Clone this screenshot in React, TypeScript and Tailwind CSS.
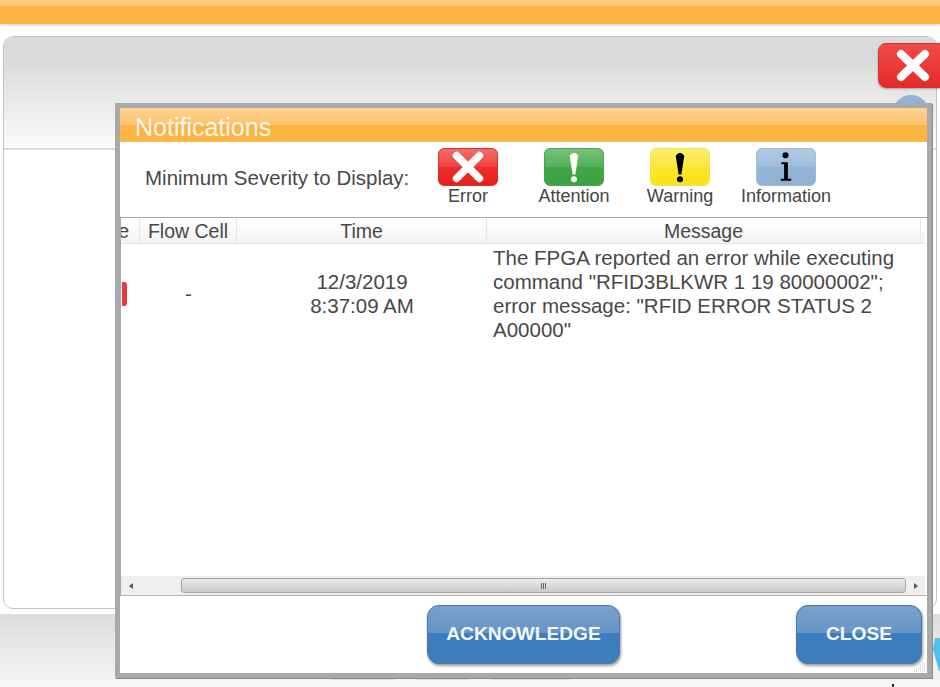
import type { ReactNode } from 'react';

const severities = [
  {
    label: 'Error',
    box: 'border-[#d8322f] bg-gradient-to-b from-[#f03a38] to-[#e81f1c]',
    mark: (
      <svg viewBox="0 0 60 38" className="relative h-full w-full">
        <path d="M18 7 L42 31 M42 7 L18 31" stroke="#fff" strokeWidth="8" strokeLinecap="round" />
      </svg>
    ),
  },
  {
    label: 'Attention',
    box: 'border-[#4d9f53] bg-gradient-to-b from-[#4aab4e] to-[#39a241]',
    mark: (
      <svg viewBox="0 0 60 38" className="relative h-full w-full">
        <path d="M25.5 7 Q30 1 34.5 7 L31.5 27 L28.5 27 Z" fill="#fff" />
        <circle cx="30" cy="32" r="3.2" fill="#fff" />
      </svg>
    ),
  },
  {
    label: 'Warning',
    box: 'border-[#f3e04f] bg-gradient-to-b from-[#fae83a] to-[#fbe316]',
    mark: (
      <svg viewBox="0 0 60 38" className="relative h-full w-full">
        <path d="M25.5 7 Q30 1 34.5 7 L31.5 27 L28.5 27 Z" fill="#000" />
        <circle cx="30" cy="32" r="3.2" fill="#000" />
      </svg>
    ),
  },
  {
    label: 'Information',
    box: 'border-[#9dbbd9] bg-gradient-to-b from-[#98b9da] to-[#8fb1d4]',
    mark: (
      <svg viewBox="0 0 60 38" className="relative h-full w-full">
        <circle cx="29.5" cy="6.5" r="3.2" fill="#000" />
        <path d="M25 14 H32 V31.5 H35.5 V33.5 H24.5 V31.5 H28 V16 H25 Z" fill="#000" />
      </svg>
    ),
  },
];

function HeaderCell({ className, children }: { className: string; children: ReactNode }) {
  return (
    <div className={`flex items-center justify-center overflow-hidden border-r border-[#e6e6e6] ${className}`}>
      {children}
    </div>
  );
}

function BlueButton({ className, children }: { className: string; children: ReactNode }) {
  return (
    <button className={`relative h-[59px] overflow-hidden rounded-[12px] border border-[#4478ad] bg-[#3e7dbd] text-[19.2px] font-bold text-[#f4f7fb] shadow-[1px_2px_3px_rgba(0,0,0,0.4)] ${className}`}>
      <span className="absolute inset-x-0 top-0 h-[27px] bg-gradient-to-b from-[#78a1cb] to-[#6695c6]" />
      <span className="relative">{children}</span>
    </button>
  );
}

export default function App() {
  return (
    <div className="relative h-[687px] w-[940px] overflow-hidden bg-white font-['Liberation_Sans',Arial,sans-serif] text-[#444]">
      <div className="h-[24px] bg-[#feb343] shadow-[0_1px_3px_rgba(0,0,0,0.2)]">
        <div className="h-[6px] bg-[#fdcb7b]" />
      </div>

      <div className="mx-[3px] mt-[12px] h-[573px] overflow-hidden rounded-[10px] border border-[#c4c4c4] bg-white">
        <div className="h-[113px] border-b-2 border-[#dcdcdc] bg-gradient-to-b from-[#dadada] from-20% to-[#fbfbfb]" />
      </div>

      <div className="mt-[5px] h-[73px] bg-gradient-to-b from-[#dcdcdc] to-[#f7f7f7]" />

      {/* things peeking out from behind the dialog */}
      <div className="absolute left-[878px] top-[43px] flex h-[45px] w-[70px] items-center overflow-hidden rounded-[8px] border border-[#d8322f] bg-gradient-to-b from-[#f04a48] to-[#e62a28] shadow-[0_1px_2px_rgba(0,0,0,0.3)]">
        <svg viewBox="0 0 66 45" className="h-[45px] w-[66px]">
          <path d="M22 11 L46 34 M46 11 L22 34" stroke="#fff" strokeWidth="8" strokeLinecap="round" />
        </svg>
      </div>
      <div className="absolute left-[893px] top-[95px] size-[36px] rounded-full bg-[#8fb4d8]" />
      <svg viewBox="0 0 8 36" className="absolute left-[932px] top-[637px] h-[36px] w-[8px]">
        <path d="M8 1 L3 1 L1 12 L7 34 L8 34 Z" fill="#4cc4ea" />
      </svg>
      <div className="absolute left-[330px] top-[679px] h-[1px] w-[65px] bg-[#dcdfe3]" />
      <div className="absolute left-[415px] top-[679px] h-[1px] w-[55px] bg-[#dcdfe3]" />
      <div className="absolute left-[490px] top-[679px] h-[1px] w-[80px] bg-[#dcdfe3]" />
      <div className="absolute left-[892px] top-[684px] h-[3px] w-[2px] bg-[#222]" />

      <div className="absolute left-[115px] top-[103px] flex h-[575px] w-[817px] flex-col border-[5px] border-[#a9a9a9] bg-white shadow-[1px_1px_0_#8a8a8a]">
        <div className="h-[34px] shrink-0 bg-[#feb343]">
          <div className="absolute inset-x-0 top-0 h-[17px] bg-gradient-to-b from-[#fdd394] to-[#fdc26a]" />
          <div className="relative pl-[15px] text-[25px] leading-[39px] text-[#fff8ec]">Notifications</div>
        </div>

        <div className="flex h-[75px] shrink-0 items-start">
          <div className="w-[295px] pl-[25px] pt-[24px] text-[20.5px] leading-[24px] text-[#484848]">
            Minimum Severity to Display:
          </div>
          <div className="flex pt-[6px]">
            {severities.map((s) => (
              <div key={s.label} className="flex w-[106px] flex-col items-center">
                <div className={`relative h-[38px] w-[60px] overflow-hidden rounded-[6px] border ${s.box}`}>
                  <div className="absolute inset-x-0 top-0 h-[18px] bg-gradient-to-b from-white/25 to-white/10" />
                  {s.mark}
                </div>
                <div className="text-[18px] leading-[20px] text-[#444]">{s.label}</div>
              </div>
            ))}
          </div>
        </div>

        <div className="flex min-h-0 flex-1 flex-col border-l border-t border-[#a8a8a8] pr-[2px]">
          <div className="flex h-[26px] shrink-0 border-b border-[#e4e4e4] bg-gradient-to-b from-white to-[#f3f3f3] text-[19.5px] leading-[26px] text-[#484848]">
            <HeaderCell className="w-[19px] !justify-start">
              <span className="ml-[-5px] w-[13px] shrink-0 text-right">e</span>
            </HeaderCell>
            <HeaderCell className="w-[97px]">Flow Cell</HeaderCell>
            <HeaderCell className="w-[250px]">Time</HeaderCell>
            <HeaderCell className="w-[434px]">Message</HeaderCell>
          </div>

          <div className="flex min-h-0 flex-1 pt-[2px] text-[20.5px] leading-[24px] text-[#484848]">
            <div className="w-[19px] pt-[36px]">
              <div className="ml-[1px] h-[24px] w-[5px] rounded-r-[3px] bg-[#e8383c]" />
            </div>
            <div className="w-[97px] pt-[36px] text-center">-</div>
            <div className="w-[250px] pt-[24px] text-center">
              12/3/2019
              <br />
              8:37:09 AM
            </div>
            <div className="w-[430px] pl-[6px]">
              The FPGA reported an error while executing command "RFID3BLKWR 1 19 80000002"; error message: "RFID ERROR STATUS 2 A00000"
            </div>
          </div>

          <div className="flex h-[19px] shrink-0 items-center bg-[#efefef]">
            <div className="flex w-[60px] items-center pl-[8px]">
              <div className="h-0 w-0 border-y-[3px] border-r-[4px] border-y-transparent border-r-[#555]" />
            </div>
            <div className="flex h-[15px] w-[725px] items-center justify-center gap-[1px] rounded-[3px] border border-[#a5a5a5] bg-gradient-to-b from-[#ececec] to-[#c9c9c9]">
              <div className="h-[6px] w-[1px] bg-[#666]" />
              <div className="h-[6px] w-[1px] bg-[#666]" />
              <div className="h-[6px] w-[1px] bg-[#666]" />
            </div>
            <div className="flex flex-1 justify-center">
              <div className="h-0 w-0 border-y-[3px] border-l-[4px] border-y-transparent border-l-[#555]" />
            </div>
          </div>
        </div>

        <div className="relative flex h-[78px] shrink-0 items-start border-t border-[#b5b5b5] pt-[9px]">
          <BlueButton className="ml-[307px] w-[193px]">ACKNOWLEDGE</BlueButton>
          <BlueButton className="ml-[176px] w-[126px]">CLOSE</BlueButton>
          <svg viewBox="0 0 12 10" className="absolute bottom-[1px] right-[2px] h-[10px] w-[12px]">
            <path d="M1 9h1M3 9h1M5 9h1M7 9h1M9 9h1M11 9h1M3 7h1M5 7h1M7 7h1M9 7h1M11 7h1M5 5h1M7 5h1M9 5h1M11 5h1M7 3h1M9 3h1M11 3h1M9 1h1M11 1h1" stroke="#c4c4c4" strokeWidth="1" />
          </svg>
        </div>
      </div>
    </div>
  );
}
